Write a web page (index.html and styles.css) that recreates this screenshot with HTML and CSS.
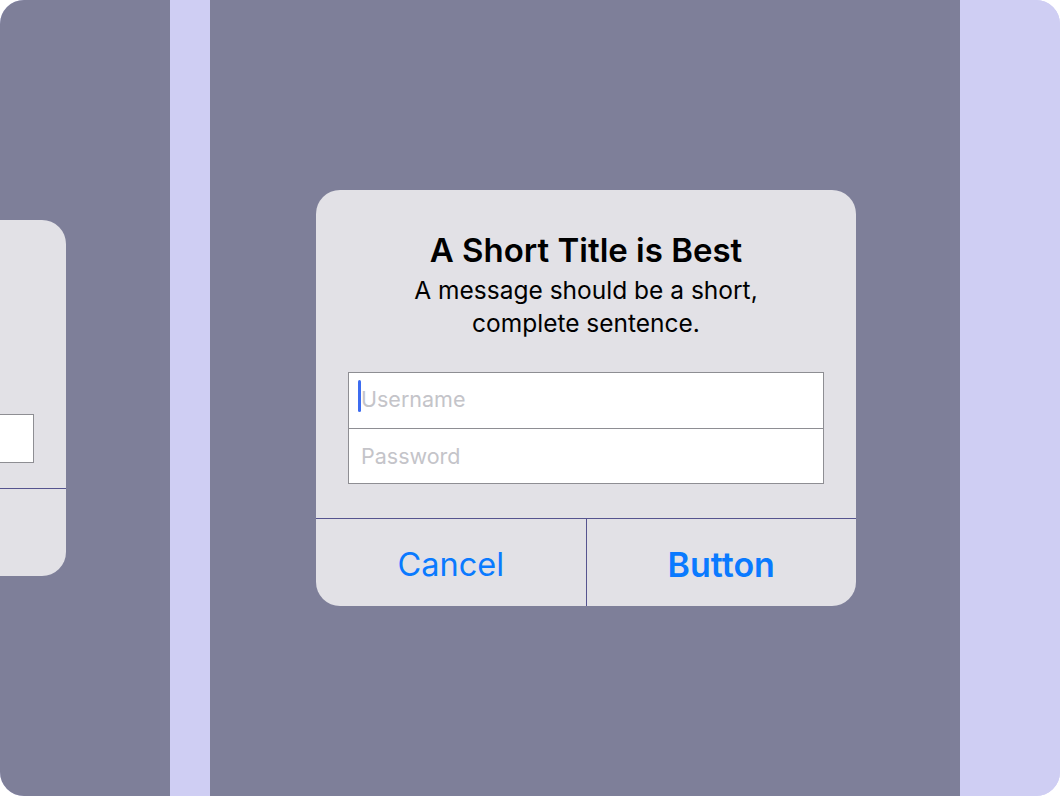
FILE: index.html
```html
<!DOCTYPE html>
<html lang="en">
<head>
<meta charset="utf-8">
<title>Alert</title>
<link rel="stylesheet" href="styles.css">
</head>
<body>
<div class="screen">
  <div class="panel panel-left">
    <div class="alert alert-small">
      <div class="alert-body">
        <div class="fields">
          <div class="field field-single"></div>
        </div>
      </div>
      <div class="actions">
        <div class="action"></div>
        <div class="action"></div>
      </div>
    </div>
  </div>
  <div class="gutter"></div>
  <div class="panel panel-main">
    <div class="alert">
      <div class="alert-body">
        <div class="alert-title">A Short Title is Best</div>
        <div class="alert-message">A message should be a short,<br>complete sentence.</div>
        <div class="fields">
          <div class="field field-first"><span class="cursor"></span><span class="placeholder">Username</span></div>
          <div class="field field-second"><span class="placeholder">Password</span></div>
        </div>
      </div>
      <div class="actions">
        <div class="action action-cancel">Cancel</div>
        <div class="action action-bold">Button</div>
      </div>
    </div>
  </div>
  <div class="gutter gutter-right"></div>
</div>
</body>
</html>
```

FILE: styles.css
```css
* { box-sizing: border-box; }
html, body { margin: 0; padding: 0; background: #ffffff; }
body { font-family: Inter, "Noto Sans", "Liberation Sans", sans-serif; }

.screen {
  width: 1060px;
  height: 796px;
  border-radius: 24px;
  overflow: hidden;
  display: flex;
  background: #cfcef3;
}

.panel {
  background: #7e7f99;
  height: 100%;
  display: flex;
  align-items: center;
  overflow: hidden;
}
.panel-left {
  width: 170px;
  justify-content: flex-end;
  padding-right: 104px;
}
.panel-main {
  width: 750px;
  justify-content: flex-start;
  padding-left: 106px;
}
.gutter { width: 40px; background: #cfcef3; }
.gutter-right { flex: 1; }

.alert {
  flex: 0 0 540px;
  width: 540px;
  background: #e2e1e6;
  border-radius: 24px;
  display: flex;
  flex-direction: column;
  overflow: hidden;
}

.alert-body {
  padding: 40px 32px 34px;
  text-align: center;
  border-bottom: 1px solid #56548f;
}
.alert-small .alert-body { padding: 194px 32px 25px; }

.alert-title {
  font-size: 33px;
  line-height: 40px;
  font-weight: 600;
  color: #000;
}
.alert-message {
  margin-top: 4px;
  font-size: 24.5px;
  line-height: 33px;
  color: #000;
}

.fields {
  margin-top: 32px;
  border: 1px solid #8e8e93;
  background: #ffffff;
  text-align: left;
}
.alert-small .fields { margin-top: 0; }
.field {
  position: relative;
  padding-left: 12px;
  display: flex;
  align-items: center;
  font-size: 21.5px;
}
.field-first {
  height: 56px;
  padding-bottom: 3px;
  border-bottom: 1px solid #8e8e93;
}
.field-second { height: 54px; }
.field-single { height: 47px; }
.placeholder { color: #c4c4c9; }
.cursor {
  position: absolute;
  left: 9px;
  top: 7px;
  width: 3px;
  height: 32px;
  border-radius: 2px;
  background: #3d6cf0;
}

.actions {
  display: flex;
  height: 87px;
}
.action {
  flex: 1;
  display: flex;
  align-items: center;
  justify-content: center;
  font-size: 34px;
  color: #0a7aff;
  padding-top: 4px;
}
.action:first-child { border-right: 1px solid #56548f; }
.action-cancel { font-size: 32.5px; }
.action-bold { font-weight: 600; }
```
